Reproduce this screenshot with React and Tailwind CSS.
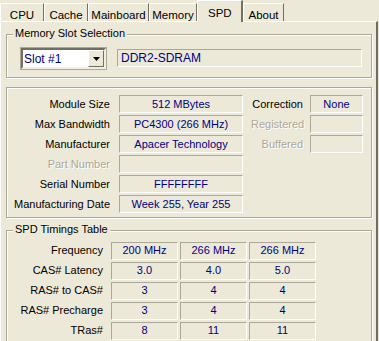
import React from "react";

const tabs = [
  { name: "CPU", w: "w-[44px]" },
  { name: "Cache", w: "w-[44px]" },
  { name: "Mainboard", w: "w-[61px]" },
  { name: "Memory", w: "w-[48px]" },
  { name: "SPD", w: "w-[46px]", active: true },
  { name: "About", w: "w-[41px]" },
];

const moduleRows = [
  { label: "Module Size", value: "512 MBytes" },
  { label: "Max Bandwidth", value: "PC4300 (266 MHz)" },
  { label: "Manufacturer", value: "Apacer Technology" },
  { label: "Part Number", value: "", disabled: true },
  { label: "Serial Number", value: "FFFFFFFF" },
  { label: "Manufacturing Date", value: "Week 255, Year 255" },
];

const sideRows = [
  { label: "Correction", value: "None" },
  { label: "Registered", value: "", disabled: true },
  { label: "Buffered", value: "", disabled: true },
];

const timings = [
  { label: "Frequency", values: ["200 MHz", "266 MHz", "266 MHz"] },
  { label: "CAS# Latency", values: ["3.0", "4.0", "5.0"] },
  { label: "RAS# to CAS#", values: ["3", "4", "4"] },
  { label: "RAS# Precharge", values: ["3", "4", "4"] },
  { label: "TRas#", values: ["8", "11", "11"] },
];

function Field({ children, className = "" }) {
  return (
    <div
      className={
        "h-[18px] flex items-center justify-center border border-t-[#ACA899] border-l-[#ACA899] border-b-white border-r-white text-[#000080] leading-none " +
        className
      }
    >
      {children}
    </div>
  );
}

function Label({ children, disabled, className = "" }) {
  return (
    <div
      className={
        "text-right leading-none " +
        (disabled ? "text-[#ACA899] [text-shadow:1px_1px_0_#fff] " : "text-black ") +
        className
      }
    >
      {children}
    </div>
  );
}

function GroupBox({ title, className = "", children }) {
  return (
    <div
      className={
        "relative ml-[5px] w-[366px] border border-[#ACA899] shadow-[1px_1px_0_#fff,inset_1px_1px_0_#fff] " +
        className
      }
    >
      {title && (
        <span className="absolute -top-[7px] left-[6px] bg-[#ECE9D8] px-[2px] leading-none text-black">
          {title}
        </span>
      )}
      {children}
    </div>
  );
}

export default function App() {
  return (
    <div
      className="w-[379px] h-[341px] overflow-hidden bg-[#ECE9D8] text-[11px]"
      style={{ fontFamily: '"Liberation Sans", Arial, sans-serif' }}
    >
      <div className="flex items-end h-[21px] relative z-10 text-[11.5px]">
        {tabs.map((t) =>
          t.active ? (
            <div
              key={t.name}
              className={`${t.w} h-[22px] -mb-[1px] bg-[#ECE9D8] border-l border-t border-white border-r-2 border-r-[#716F64] flex items-start pt-[4px] pl-[10px] text-black`}
            >
              {t.name}
            </div>
          ) : (
            <div
              key={t.name}
              className={`${t.w} h-[18px] bg-[#ECE9D8] border-l border-t border-white border-r border-r-[#716F64] flex items-start justify-center pt-[3px] text-black`}
            >
              {t.name}
            </div>
          )
        )}
      </div>

      <div className="w-[378px] h-[320px] border-t border-l border-white border-r-2 border-r-[#716F64] pt-[12px]">
        <GroupBox title="Memory Slot Selection" className="h-[44px] flex items-start pt-[13px]">
          <div className="ml-[14px] w-[85px] h-[21px] flex items-center bg-white border-2 border-t-[#716F64] border-l-[#716F64] border-b-[#F1EFE2] border-r-[#F1EFE2] outline outline-1 outline-[#ACA899]">
            <span className="flex-1 pl-[1px] text-[12px] text-[#000080] leading-none">Slot #1</span>
            <div className="w-[16px] h-[17px] flex items-center justify-center bg-[#ECE9D8] border border-t-white border-l-white border-b-[#716F64] border-r-[#716F64]">
              <svg width="7" height="4" viewBox="0 0 7 4">
                <path d="M0 0h7L3.5 4z" fill="#000" />
              </svg>
            </div>
          </div>
          <Field className="ml-[11px] mt-[1px] w-[245px] !justify-start pl-[3px] text-[12px]">
            DDR2-SDRAM
          </Field>
        </GroupBox>

        <GroupBox className="mt-[9px] h-[131px] flex pt-[7px]">
          <div className="flex flex-col gap-[2px]">
            {moduleRows.map((r) => (
              <div key={r.label} className="flex items-center h-[18px]">
                <Label disabled={r.disabled} className="w-[103px]">
                  {r.label}
                </Label>
                <Field className="ml-[9px] w-[124px]">{r.value}</Field>
              </div>
            ))}
          </div>
          <div className="flex flex-col gap-[2px] ml-[8px]">
            {sideRows.map((r) => (
              <div key={r.label} className="flex items-center h-[18px]">
                <Label disabled={r.disabled} className="w-[52px]">
                  {r.label}
                </Label>
                <Field className="ml-[7px] w-[53px]">{r.value}</Field>
              </div>
            ))}
          </div>
        </GroupBox>

        <GroupBox title="SPD Timings Table" className="mt-[12px] h-[130px] pt-[10px]">
          <div className="flex flex-col gap-[1px]">
            {timings.map((r) => (
              <div key={r.label} className="flex items-center h-[19px]">
                <Label className="w-[96px]">{r.label}</Label>
                <div className="ml-[8px] flex gap-[2px]">
                  {r.values.map((v, i) => (
                    <Field key={i} className="w-[67px] !h-[18px]">
                      {v}
                    </Field>
                  ))}
                </div>
              </div>
            ))}
          </div>
        </GroupBox>
      </div>
    </div>
  );
}
